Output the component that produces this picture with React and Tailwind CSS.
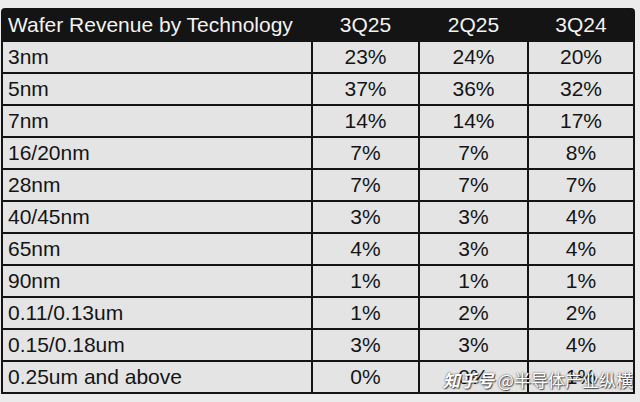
import React from "react";

const rows = [
  ["3nm", "23%", "24%", "20%"],
  ["5nm", "37%", "36%", "32%"],
  ["7nm", "14%", "14%", "17%"],
  ["16/20nm", "7%", "7%", "8%"],
  ["28nm", "7%", "7%", "7%"],
  ["40/45nm", "3%", "3%", "4%"],
  ["65nm", "4%", "3%", "4%"],
  ["90nm", "1%", "1%", "1%"],
  ["0.11/0.13um", "1%", "2%", "2%"],
  ["0.15/0.18um", "3%", "3%", "4%"],
  ["0.25um and above", "0%", "0%", "1%"],
];

export default function App() {
  return (
    <div
      className="relative w-[640px] h-[402px] overflow-hidden bg-[#ebebeb] pt-[8px] pl-[1px]"
      style={{ fontFamily: '"Liberation Sans", Arial, sans-serif' }}
    >
      <div className="w-[634px] bg-[#141414] rounded-t-[4px] px-[2px] pb-[2px]">
        <div className="grid grid-cols-[308px_105px_107px_104px] gap-x-[2px] h-[34px] items-center text-[21px] text-[#f2f2f2]">
          <div className="pl-[5px] whitespace-nowrap">Wafer Revenue by Technology</div>
          <div className="text-center">3Q25</div>
          <div className="text-center">2Q25</div>
          <div className="text-center">3Q24</div>
        </div>
        <div className="grid grid-cols-[308px_105px_107px_104px] gap-[2px] text-[21px] text-[#141414]">
          {rows.map((r, i) => (
            <React.Fragment key={i}>
              <div className="h-[30px] bg-[#e4e4e4] flex items-center pl-[5px] whitespace-nowrap">
                {r[0]}
              </div>
              <div className="h-[30px] bg-[#e4e4e4] flex items-center justify-center">{r[1]}</div>
              <div className="h-[30px] bg-[#e4e4e4] flex items-center justify-center">{r[2]}</div>
              <div className="h-[30px] bg-[#e4e4e4] flex items-center justify-center">{r[3]}</div>
            </React.Fragment>
          ))}
        </div>
      </div>
      <div
        className="absolute left-[443px] top-[369px] text-[17px] leading-[22px] text-white whitespace-nowrap [text-shadow:0_0_2px_rgba(0,0,0,0.7),1px_1px_1px_rgba(0,0,0,0.6)]"
        style={{ fontFamily: '"Noto Sans CJK SC", "Liberation Sans", sans-serif' }}
      >
        <span className="italic font-bold">知乎号</span> @半导体产业纵横
      </div>
    </div>
  );
}
